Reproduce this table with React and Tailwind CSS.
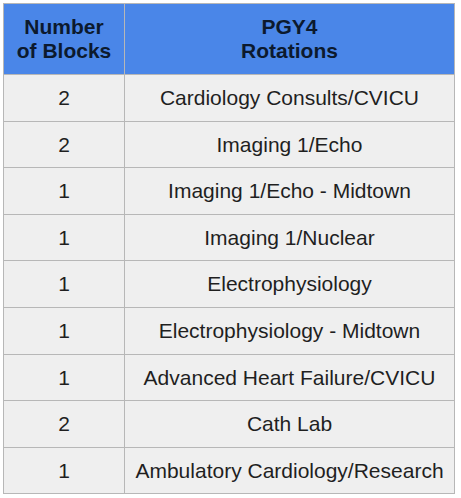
import React from 'react';

const rows = [
  ['2', 'Cardiology Consults/CVICU'],
  ['2', 'Imaging 1/Echo'],
  ['1', 'Imaging 1/Echo - Midtown'],
  ['1', 'Imaging 1/Nuclear'],
  ['1', 'Electrophysiology'],
  ['1', 'Electrophysiology - Midtown'],
  ['1', 'Advanced Heart Failure/CVICU'],
  ['2', 'Cath Lab'],
  ['1', 'Ambulatory Cardiology/Research'],
];

export default function App() {
  return (
    <div className="w-[461px] h-[498px] bg-white pt-[3px] pl-[3px] font-['Liberation_Sans',Arial,sans-serif]">
      <table className="border-collapse w-[452px] table-fixed">
        <colgroup>
          <col className="w-[121px]" />
          <col />
        </colgroup>
        <thead>
          <tr className="h-[71px] bg-[#4a86e8] text-[#0c1a2e] font-bold text-[21px] leading-[24px]">
            <th className="border border-[#b7b7b7] text-center font-bold">Number<br />of Blocks</th>
            <th className="border border-[#b7b7b7] text-center font-bold">PGY4<br />Rotations</th>
          </tr>
        </thead>
        <tbody>
          {rows.map(([n, name], i) => (
            <tr key={i} className="h-[46.6px] bg-[#efefef] text-[#1f1f1f] text-[21px]">
              <td className="border border-[#b7b7b7] text-center">{n}</td>
              <td className="border border-[#b7b7b7] text-center">{name}</td>
            </tr>
          ))}
        </tbody>
      </table>
    </div>
  );
}
